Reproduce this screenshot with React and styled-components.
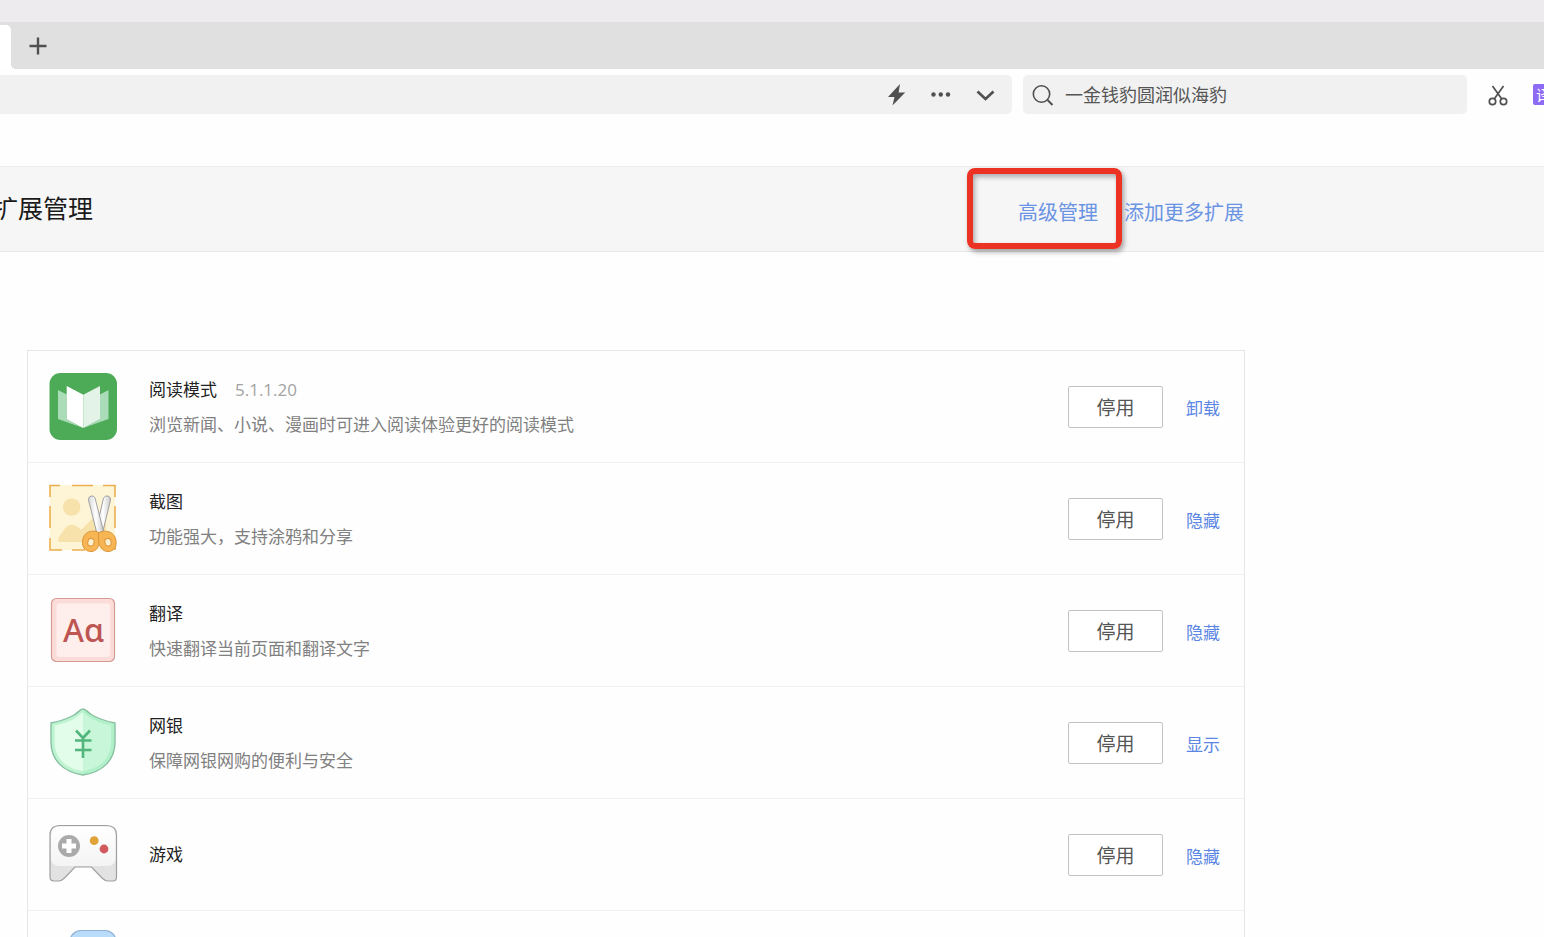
import React, { useState } from "react";
import styled, { createGlobalStyle } from "styled-components";

const GlobalStyle = createGlobalStyle`
  * {
    box-sizing: border-box;
  }

  body {
    margin: 0;
    overflow: hidden;
    background: #fefefe;
    font-family: "Open Sans", "Noto Sans CJK SC", sans-serif;
    color: #222;
  }

  button, input {
    font-family: inherit;
  }
`;

const Browser = styled.div`
  display: flex;
  flex-direction: column;
  height: 100vh;
  overflow: hidden;
`;

const TitleStrip = styled.div`
  flex: none;
  height: 22px;
  background: #eeebef;
`;

const TabBar = styled.div`
  flex: none;
  display: flex;
  align-items: flex-end;
  height: 47px;
  background: #e0e0e0;
`;

const ActiveTab = styled.div`
  position: relative;
  width: 11px;
  height: 44px;
  background: #fff;
  border-radius: 0 5px 0 0;

  /* small curve where the tab meets the toolbar */
  &::after {
    content: "";
    position: absolute;
    left: 100%;
    bottom: 0;
    width: 5px;
    height: 5px;
    background: radial-gradient(circle at 100% 0, #e0e0e0 5px, #fff 5px);
  }
`;

const IconButton = styled.button`
  flex: none;
  display: flex;
  align-items: center;
  justify-content: center;
  width: 24px;
  height: 24px;
  padding: 0;
  border: none;
  background: transparent;
  color: #505050;
  cursor: pointer;
`;

const NewTab = styled(IconButton)`
  width: 54px;
  height: 46px;
`;

const Toolbar = styled.div`
  flex: none;
  display: flex;
  padding: 6px 0 52px;
  background: #fefefe;
`;

const AddressBar = styled.div`
  flex: 1;
  display: flex;
  align-items: center;
  justify-content: flex-end;
  gap: 20px;
  height: 39px;
  padding-right: 15px;
  margin-right: 11px;
  background: #f1f1f1;
  border-radius: 0 5px 5px 0;
`;

const SearchBox = styled.label`
  flex: 0 1 444px;
  display: flex;
  align-items: center;
  gap: 10px;
  height: 39px;
  padding: 0 8px;
  color: #505050;
  background: #f1f1f1;
  border-radius: 5px;
`;

const SearchInput = styled.input`
  flex: 1;
  min-width: 0;
  padding: 0;
  border: none;
  outline: none;
  background: transparent;
  color: #555;
  font-size: 18px;
  line-height: 24px;
`;

const Tools = styled.div`
  flex: 0 0 77px;
  display: flex;
  align-items: center;
  gap: 23px;
  height: 39px;
  padding-left: 19px;
  overflow: hidden;
`;

const TranslateTool = styled(IconButton)`
  width: 21px;
  height: 21px;
  border-radius: 2px;
  background: #8d6bf5;
  color: #fff;
  font-size: 15px;
`;

const PageHeader = styled.header`
  flex: none;
  height: 86px;
  background: #f6f6f6;
  border-top: 1px solid #ececec;
  border-bottom: 1px solid #e6e6e6;
`;

const HeaderInner = styled.div`
  display: flex;
  align-items: center;
  justify-content: space-between;
  max-width: 1251px;
  height: 100%;
  margin-left: -7px;
`;

const Title = styled.h1`
  margin: 0;
  padding-bottom: 2px;
  font-size: 25px;
  font-weight: 400;
  line-height: 32px;
  color: #1a1a1a;
`;

const HeaderLinks = styled.nav`
  display: flex;
  gap: 26px;
  padding-top: 8px;
`;

const Link = styled.a`
  position: relative;
  font-size: ${(p) => (p.$large ? 20 : 17)}px;
  line-height: 24px;
  color: ${(p) => (p.$large ? "#6a93e4" : "#5b86e4")};
  text-decoration: none;
  white-space: nowrap;
`;

const Highlight = styled.span`
  position: absolute;
  top: -33px;
  left: -51px;
  width: 155px;
  height: 81px;
  border: 6px solid #ec3323;
  border-radius: 8px;
  box-shadow: 2px 3px 5px rgba(0, 0, 0, 0.35), inset 2px 3px 5px rgba(0, 0, 0, 0.3);
  pointer-events: none;
`;

const List = styled.ul`
  flex: none;
  max-width: 1218px;
  margin: 98px 24px 0 27px;
  padding: 0;
  list-style: none;
  border: 1px solid #e6e6e6;
`;

const Row = styled.li`
  display: flex;
  align-items: center;
  height: 112px;
  padding: 0 24px 0 21px;
  border-bottom: 1px solid #f1f1f1;
`;

const Info = styled.div`
  flex: 1;
  margin-left: 32px;
  font-size: 17px;
  line-height: 35px;
`;

const Name = styled.div`
  display: flex;
  gap: 18px;
  color: #222;
`;

const Version = styled.span`
  color: #a3a3a3;
`;

const Description = styled.div`
  color: #808080;
`;

const Actions = styled.div`
  display: flex;
  align-items: center;
  gap: 23px;

  a {
    padding-top: 4px;
  }
`;

const ToggleButton = styled.button`
  width: 95px;
  height: 42px;
  padding: 2px 0 0;
  border: 1px solid #c3c3c3;
  border-radius: 2px;
  background: #fff;
  color: #555;
  font-size: 19px;
  line-height: 24px;
  cursor: pointer;
`;

const Picture = styled.svg`
  flex: none;
  width: 68px;
  height: 68px;
  overflow: visible;
`;

const ReaderIcon = () => (
  <Picture viewBox="0 0 68 68">
    <rect x="0.5" width="67.5" height="67" rx="11" fill="#4daa57" />
    <path d="M9 17L17.7 21.5V46.5L34.3 55L51 46.5V21.5L59.5 17V46L34.3 55L9 46Z" fill="#a9dcb7" />
    <path d="M17.7 13L34.3 21.7V55L17.7 46.3Z" fill="#fff" />
    <path d="M51 13L34.3 21.7V55L51 46.3Z" fill="#e4f3e8" />
  </Picture>
);

const CaptureIcon = () => (
  <Picture viewBox="0 0 68 68">
    <defs>
      <linearGradient id="blade" x1="0" x2="1">
        <stop offset="0" stopColor="#d8d8d8" />
        <stop offset="0.5" stopColor="#fff" />
        <stop offset="1" stopColor="#cacaca" />
      </linearGradient>
    </defs>
    <rect x="1" y="0" width="65" height="65" fill="#fdf5d6" />
    <circle cx="22.7" cy="22" r="8.7" fill="#f8e2ac" />
    <path d="M9.3 57V53L17 42Q22.5 37 29 42L32 45L45 32Q48 29 52 32L57 38V57Z" fill="#f8e2ac" />
    <path
      d="M1 12V0.5H11M23 0.5H44M54 0.5H66V12M66 21V43M66 53V65M1 21V43M1 53V65H13M23 65H36"
      fill="none"
      stroke="#ebae4e"
      strokeWidth="1.6"
    />
    <path d="M54.5 13Q56 10.500 59 11Q62 12 61.500 15L53.500 48H46.500Z" fill="url(#blade)" stroke="#a0a0a0" strokeWidth="1" />
    <path d="M39.5 15Q39 12 42 11Q45 10.500 46 13L54.500 46L48 48.500Z" fill="url(#blade)" stroke="#a0a0a0" strokeWidth="1" />
    <path
      d="M50.5 48C45 44.5 37 46 34.5 52C31.5 60 35 66.500 42 66.500C48 66.500 50 61 50.5 55Z"
      fill="#f7b653"
      stroke="#dc963a"
      strokeWidth="1"
    />
    <path
      d="M49.5 48C55 44.5 63 46 66 52C69 60 66 66.500 59 66.500C53 66.500 50 61 49.5 55Z"
      fill="#f7b653"
      stroke="#dc963a"
      strokeWidth="1"
    />
    <rect x="39" y="53.5" width="6" height="7.5" rx="2.6" fill="#fdf0d0" stroke="#dc963a" transform="rotate(14 42 57)" />
    <rect x="56" y="53.5" width="6" height="7.5" rx="2.6" fill="#fdf0d0" stroke="#dc963a" transform="rotate(-14 59 57)" />
  </Picture>
);

const Letters = styled.text`
  font-family: "Noto Sans", sans-serif;
  font-size: 32px;
  font-weight: 500;
  fill: #bd5552;
`;

const TranslateIcon = () => (
  <Picture viewBox="0 0 68 68">
    <rect x="2.5" y="1.5" width="63" height="63" rx="5" fill="#fbdcd8" stroke="#d59a94" strokeWidth="1.2" />
    <rect x="7.5" y="6.5" width="53.5" height="53.5" rx="3" fill="#feefec" />
    <Letters x="34.5" y="44.5" textAnchor="middle">Aɑ</Letters>
  </Picture>
);

const shield = "M34 0C37 0 38 3 43 6C50 10 56 12 66 14V33C66 51 54 63 34 66C14 63 2 51 2 33V14C12 12 18 10 25 6C30 3 31 0 34 0Z";

const BankIcon = () => (
  <Picture viewBox="0 0 68 68">
    <path d={shield} fill="#bdf3d1" stroke="#86bfa0" strokeWidth="1.4" />
    <path d={shield} fill="#e2fdea" transform="translate(4 4) scale(0.88)" />
    <path d="M34 1C37 1 38 4 43 7C50 11 56 13 65 15V33C65 50 53 62 34 65Z" fill="#93e8b4" opacity="0.32" />
    <path d="M27 21.500L34 29L41 21.500M34 29V49M26 31.500H42.500M26 41H42.500" fill="none" stroke="#51b57c" strokeWidth="2.6" />
  </Picture>
);

const GameIcon = () => (
  <Picture viewBox="0 0 68 68">
    <defs>
      <linearGradient id="pad" x1="0" y1="0" x2="0" y2="1">
        <stop offset="0" stopColor="#fff" />
        <stop offset="1" stopColor="#f4f4f4" />
      </linearGradient>
    </defs>
    <path
      d="M1 14Q1 4.500 11 4.500H57.500Q67.500 4.500 67.500 14V56Q67.500 60 64 60H59Q56 60 53 57L42.500 46H26L15.500 57Q12.500 60 9.500 60H5Q1 60 1 56Z"
      fill="#e2e2e2"
      stroke="#a0a0a0"
      strokeWidth="1.2"
    />
    <path d="M2 14Q2 5.500 11 5.500H57.500Q66.500 5.500 66.500 14V37Q66.500 45 58 45H10.500Q2 45 2 37Z" fill="url(#pad)" />
    <circle cx="20" cy="25" r="11" fill="#aaa" />
    <path d="M17.500 18H22.500V22.500H27V27.500H22.500V32H17.500V27.500H13V22.500H17.500Z" fill="#fff" />
    <circle cx="45.200" cy="19.700" r="4.400" fill="#e0a338" />
    <circle cx="55" cy="28" r="4.400" fill="#d2595b" />
  </Picture>
);

const BlueIcon = () => (
  <Picture viewBox="0 0 68 68">
    <rect x="21" y="-2.500" width="46" height="72" rx="11" fill="#b9dcfb" stroke="#8fb1cf" strokeWidth="1.200" />
  </Picture>
);

const extensions = [
  { icon: ReaderIcon, name: "阅读模式", version: "5.1.1.20", text: "浏览新闻、小说、漫画时可进入阅读体验更好的阅读模式", action: "卸载" },
  { icon: CaptureIcon, name: "截图", text: "功能强大，支持涂鸦和分享", action: "隐藏" },
  { icon: TranslateIcon, name: "翻译", text: "快速翻译当前页面和翻译文字", action: "隐藏" },
  { icon: BankIcon, name: "网银", text: "保障网银网购的便利与安全", action: "显示" },
  { icon: GameIcon, name: "游戏", action: "隐藏" },
];

const ExtensionRow = ({ item }) => {
  const Icon = item.icon;
  return (
    <Row>
      <Icon />
      <Info>
        <Name>
          {item.name}
          {item.version && <Version>{item.version}</Version>}
        </Name>
        {item.text && <Description>{item.text}</Description>}
      </Info>
      <Actions>
        <ToggleButton type="button">停用</ToggleButton>
        <Link href="#">{item.action}</Link>
      </Actions>
    </Row>
  );
};

const App = () => {
  const [query, setQuery] = useState("一金钱豹圆润似海豹");

  return (
    <>
      <GlobalStyle />
      <Browser>
        <TitleStrip />
        <TabBar>
          <ActiveTab />
          <NewTab type="button" aria-label="新建标签页">
            <svg width="18" height="18" viewBox="0 0 18 18" stroke="currentColor" strokeWidth="2.4">
              <path d="M9 0.500V17.500M0.500 9H17.500" />
            </svg>
          </NewTab>
        </TabBar>

        <Toolbar>
          <AddressBar>
            <IconButton type="button" aria-label="加速">
              <svg width="24" height="24" viewBox="0 0 24 24" fill="currentColor">
                <path d="M15 1L3 14H9.500L7.500 22.500L20.200 9.500H13.600Z" />
              </svg>
            </IconButton>
            <IconButton type="button" aria-label="更多">
              <svg width="24" height="24" viewBox="0 0 24 24" fill="currentColor">
                <circle cx="4.500" cy="11.500" r="2.200" />
                <circle cx="11.800" cy="11.500" r="2.200" />
                <circle cx="19" cy="11.500" r="2.200" />
              </svg>
            </IconButton>
            <IconButton type="button" aria-label="展开">
              <svg width="24" height="24" viewBox="0 0 24 24" fill="none" stroke="currentColor" strokeWidth="2.700">
                <path d="M4.500 8.500L12.500 16L20.500 8.500" />
              </svg>
            </IconButton>
          </AddressBar>

          <SearchBox>
            <svg width="24" height="24" viewBox="0 0 24 24" fill="none" stroke="currentColor" strokeWidth="1.600">
              <circle cx="10.500" cy="11" r="8.200" />
              <path d="M16.500 17L21.500 22" strokeWidth="2" />
            </svg>
            <SearchInput aria-label="搜索" value={query} onChange={(e) => setQuery(e.target.value)} />
          </SearchBox>

          <Tools>
            <IconButton type="button" aria-label="截图">
              <svg width="24" height="24" viewBox="0 0 24 24" fill="none" stroke="currentColor" strokeWidth="1.700">
                <circle cx="6.500" cy="18.500" r="3.200" />
                <circle cx="17.500" cy="18.500" r="3.200" />
                <path d="M6.500 3L15.600 15.800M17.500 3L8.400 15.800" />
              </svg>
            </IconButton>
            <TranslateTool type="button">译</TranslateTool>
          </Tools>
        </Toolbar>

        <PageHeader>
          <HeaderInner>
            <Title>扩展管理</Title>
            <HeaderLinks>
              <Link href="#" $large>
                高级管理
                <Highlight />
              </Link>
              <Link href="#" $large>添加更多扩展</Link>
            </HeaderLinks>
          </HeaderInner>
        </PageHeader>

        <List>
          {extensions.map((item) => (
            <ExtensionRow key={item.name} item={item} />
          ))}
          <Row>
            <BlueIcon />
          </Row>
        </List>
      </Browser>
    </>
  );
};

export default App;
